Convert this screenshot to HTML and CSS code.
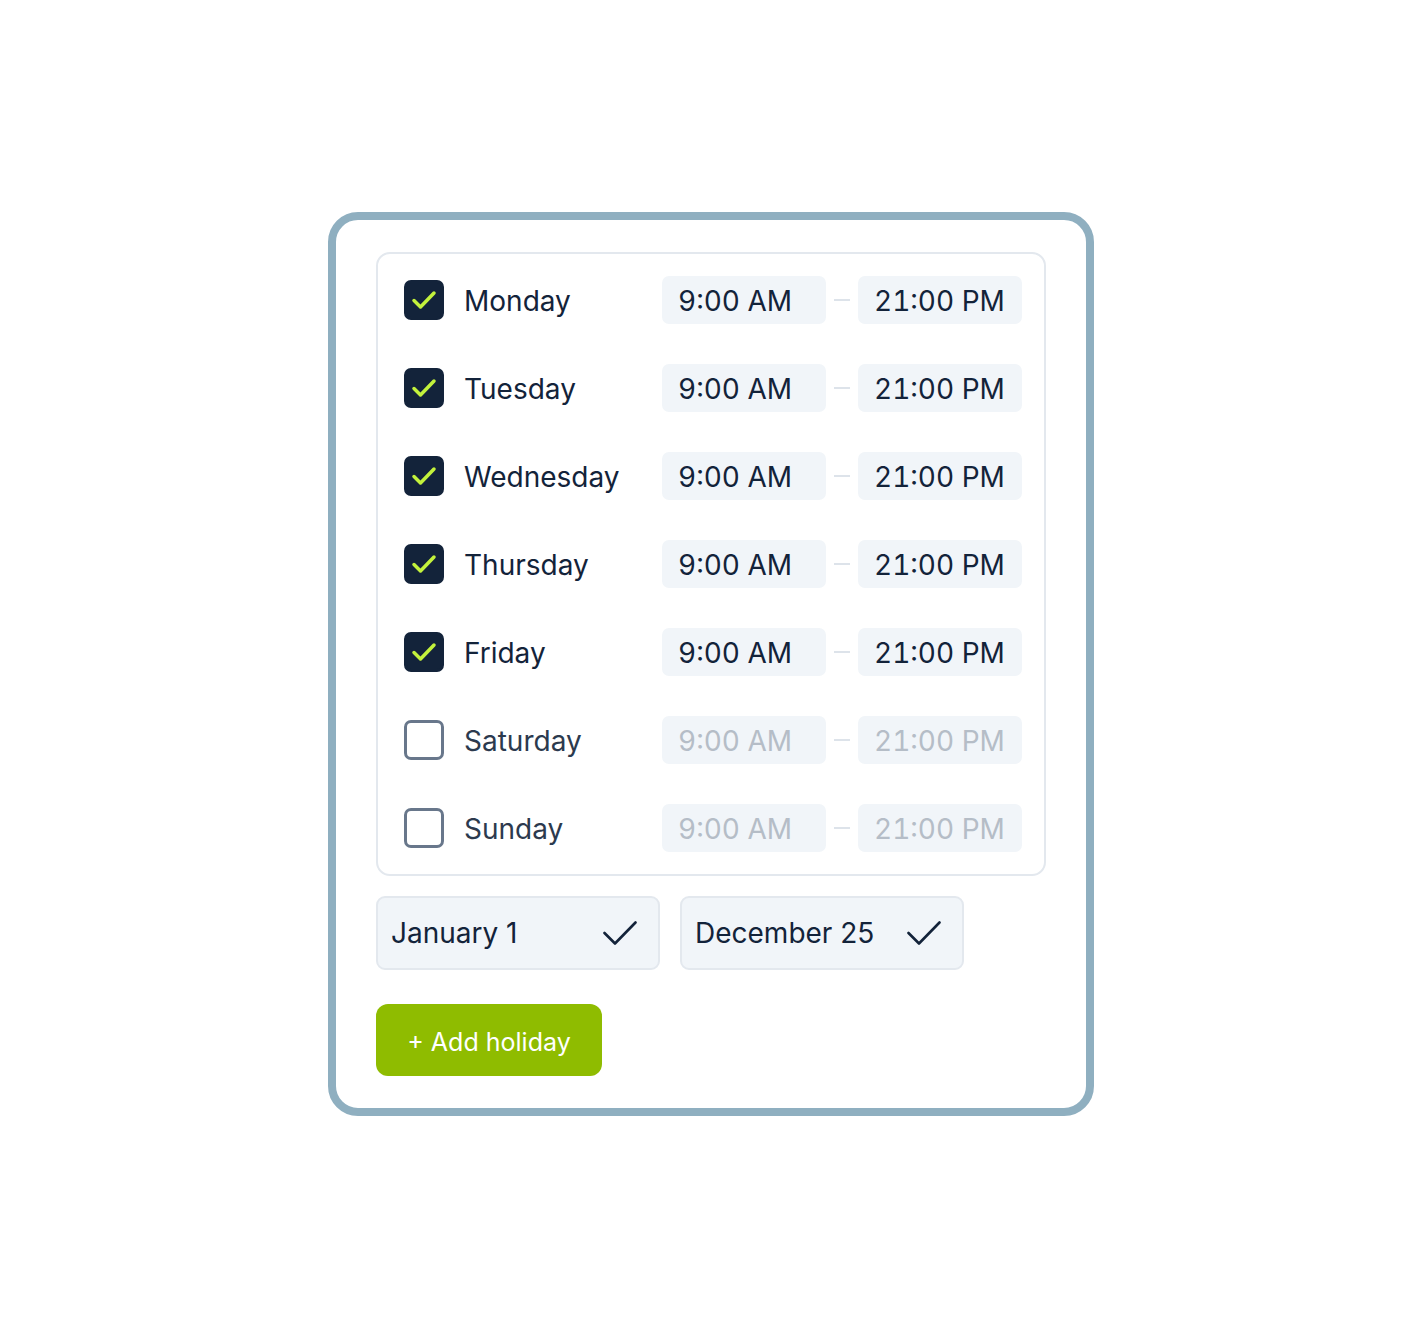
FILE: index.html
```html
<!DOCTYPE html>
<html lang="en">
<head>
    <meta charset="UTF-8">
    <meta name="viewport" content="width=device-width, initial-scale=1.0">
    <title>Opening hours</title>
    <link rel="stylesheet" href="styles.css">
</head>
<body>
    <div class="card">
        <div class="week">
            <div class="day">
                <span class="box checked">
                    <svg viewBox="0 0 40 40"><path d="M10 20.5 L16.5 27 L30 13"/></svg>
                </span>
                <span class="day-name">Monday</span>
                <span class="time">9:00 AM</span>
                <span class="dash"></span>
                <span class="time">21:00 PM</span>
            </div>
            <div class="day">
                <span class="box checked">
                    <svg viewBox="0 0 40 40"><path d="M10 20.5 L16.5 27 L30 13"/></svg>
                </span>
                <span class="day-name">Tuesday</span>
                <span class="time">9:00 AM</span>
                <span class="dash"></span>
                <span class="time">21:00 PM</span>
            </div>
            <div class="day">
                <span class="box checked">
                    <svg viewBox="0 0 40 40"><path d="M10 20.5 L16.5 27 L30 13"/></svg>
                </span>
                <span class="day-name">Wednesday</span>
                <span class="time">9:00 AM</span>
                <span class="dash"></span>
                <span class="time">21:00 PM</span>
            </div>
            <div class="day">
                <span class="box checked">
                    <svg viewBox="0 0 40 40"><path d="M10 20.5 L16.5 27 L30 13"/></svg>
                </span>
                <span class="day-name">Thursday</span>
                <span class="time">9:00 AM</span>
                <span class="dash"></span>
                <span class="time">21:00 PM</span>
            </div>
            <div class="day">
                <span class="box checked">
                    <svg viewBox="0 0 40 40"><path d="M10 20.5 L16.5 27 L30 13"/></svg>
                </span>
                <span class="day-name">Friday</span>
                <span class="time">9:00 AM</span>
                <span class="dash"></span>
                <span class="time">21:00 PM</span>
            </div>
            <div class="day off">
                <span class="box"></span>
                <span class="day-name">Saturday</span>
                <span class="time">9:00 AM</span>
                <span class="dash"></span>
                <span class="time">21:00 PM</span>
            </div>
            <div class="day off">
                <span class="box"></span>
                <span class="day-name">Sunday</span>
                <span class="time">9:00 AM</span>
                <span class="dash"></span>
                <span class="time">21:00 PM</span>
            </div>
        </div>

        <div class="holidays">
            <div class="holiday">
                <span>January 1</span>
                <svg viewBox="0 0 34 26"><path d="M1.5 13 L12 23.5 L32.5 2.5"/></svg>
            </div>
            <div class="holiday">
                <span>December 25</span>
                <svg viewBox="0 0 34 26"><path d="M1.5 13 L12 23.5 L32.5 2.5"/></svg>
            </div>
        </div>

        <button class="add-btn">+ Add holiday</button>
    </div>
</body>
</html>
```

FILE: styles.css
```css
body {
    font-family: Inter, "Noto Sans", sans-serif;
    background-color: #fff;
    color: #13233a;
    margin: 0;
    padding: 0;
    display: flex;
    justify-content: center;
    align-items: center;
    height: 100vh;
}

.card {
    width: 766px;
    box-sizing: border-box;
    margin: 2px 2px 0 0;
    border: 8px solid #8fafc0;
    border-radius: 30px;
    padding: 32px 40px;
    background-color: #fff;
}

.week {
    border: 2px solid #e3e8ee;
    border-radius: 14px;
    padding: 22px 22px 22px 26px;
    display: flex;
    flex-direction: column;
    gap: 40px;
}

.day {
    display: flex;
    align-items: center;
    height: 48px;
}

.box {
    width: 40px;
    height: 40px;
    box-sizing: border-box;
    border: 3px solid #68778b;
    border-radius: 7px;
    flex-shrink: 0;
}

.box.checked {
    background-color: #13233a;
    border-color: #13233a;
}

.box svg {
    display: block;
    width: 40px;
    height: 40px;
    margin: -3px;
    fill: none;
    stroke: #c3f23c;
    stroke-width: 3.5;
    stroke-linecap: round;
    stroke-linejoin: round;
}

.day-name {
    flex: 1;
    margin-left: 20px;
    padding-top: 2px;
    font-size: 28px;
    color: #13233a;
}

.off .day-name {
    color: #2c3a4e;
}

.time {
    width: 164px;
    height: 48px;
    box-sizing: border-box;
    padding: 2px 0 0 16px;
    display: flex;
    align-items: center;
    background-color: #f1f5f9;
    border-radius: 7px;
    font-size: 28px;
    font-variant-numeric: tabular-nums;
    color: #13233a;
}

.off .time {
    color: #b5bdc7;
}

.dash {
    width: 16px;
    height: 2px;
    margin: 0 8px;
    background-color: #dde3ea;
}

.holidays {
    display: flex;
    gap: 20px;
    margin-top: 20px;
}

.holiday {
    width: 284px;
    height: 74px;
    box-sizing: border-box;
    border: 2px solid #e3e8ee;
    border-radius: 9px;
    background-color: #f1f5f9;
    padding: 0 21px 0 13px;
    display: flex;
    align-items: center;
    justify-content: space-between;
    font-size: 28px;
    color: #13233a;
}

.holiday svg {
    width: 34px;
    height: 26px;
    fill: none;
    stroke: #13233a;
    stroke-width: 2.6;
    stroke-linecap: round;
    stroke-linejoin: round;
}

.add-btn {
    display: block;
    margin-top: 34px;
    width: 226px;
    height: 72px;
    padding-top: 4px;
    background-color: #8fbc00;
    color: #fff;
    border: none;
    border-radius: 12px;
    font-family: Inter, "Noto Sans", sans-serif;
    font-size: 25px;
    cursor: pointer;
}

.add-btn:hover {
    background-color: #82ab00;
}
```
